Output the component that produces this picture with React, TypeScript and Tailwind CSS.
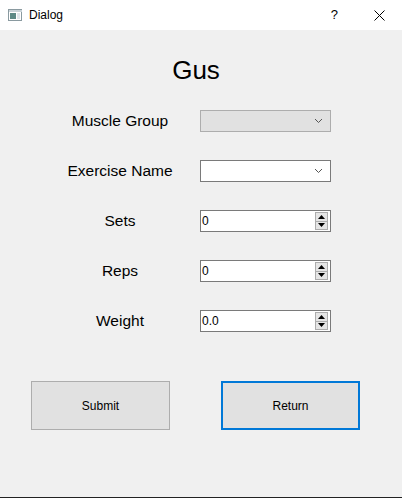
import React from "react";

const ui = { fontFamily: '"Liberation Sans", Arial, sans-serif' };

const Chevron = () => (
  <svg width="9" height="6" viewBox="0 0 9 6" className="mr-[7px]">
    <path d="M1 1 L4.5 4.5 L8 1" fill="none" stroke="#555" strokeWidth="1" />
  </svg>
);

const ComboBox = ({ disabled }: { disabled?: boolean }) => (
  <div
    className={`flex items-center justify-end w-[131px] h-[22px] border ${
      disabled ? "bg-[#e1e1e1] border-[#adadad]" : "bg-white border-[#7a7a7a]"
    }`}
  >
    <Chevron />
  </div>
);

const SpinBox = ({ value }: { value: string }) => (
  <div className="flex items-center w-[131px] h-[22px] border border-[#7a7a7a] bg-white">
    <span className="flex-1 pl-[1px] text-[12px] text-black leading-none">{value}</span>
    <div className="flex flex-col mr-[2px] w-[13px] h-[18px]">
      <div className="flex-1 flex items-center justify-center border border-[#adadad] bg-[#e5e5e5]">
        <svg width="7" height="4" viewBox="0 0 7 4">
          <path d="M3.5 0 L7 4 L0 4 Z" fill="#000" />
        </svg>
      </div>
      <div className="flex-1 flex items-center justify-center border border-t-0 border-[#adadad] bg-[#e5e5e5]">
        <svg width="7" height="4" viewBox="0 0 7 4">
          <path d="M0 0 L7 0 L3.5 4 Z" fill="#000" />
        </svg>
      </div>
    </div>
  </div>
);

const rows: { label: string; field: React.ReactNode }[] = [
  { label: "Muscle Group", field: <ComboBox disabled /> },
  { label: "Exercise Name", field: <ComboBox /> },
  { label: "Sets", field: <SpinBox value="0" /> },
  { label: "Reps", field: <SpinBox value="0" /> },
  { label: "Weight", field: <SpinBox value="0.0" /> },
];

export default function App() {
  return (
    <div className="w-[402px] h-[498px] flex flex-col bg-[#f0f0f0]" style={ui}>
      {/* title bar */}
      <div className="h-[30px] bg-white flex items-center">
        <svg width="14" height="12" viewBox="0 0 14 12" className="ml-[8px]">
          <rect x="0.5" y="0.5" width="13" height="11" fill="#fff" stroke="#8a9aa0" />
          <rect x="1" y="1" width="13" height="2" fill="#c9d3d8" />
          <rect x="2" y="4" width="6" height="6" fill="#5d8a86" />
          <rect x="9" y="4" width="3" height="6" fill="#dfe6ea" />
        </svg>
        <span className="ml-[7px] text-[12px] text-black">Dialog</span>
        <span className="ml-auto mr-[36px] text-[13px] text-black">?</span>
        <svg width="11" height="11" viewBox="0 0 11 11" className="mr-[17px]">
          <path d="M0.5 0.5 L10.5 10.5 M10.5 0.5 L0.5 10.5" stroke="#000" strokeWidth="1" />
        </svg>
      </div>

      {/* body */}
      <div className="flex-1 flex flex-col">
        <div className="mt-[25px] h-[30px] leading-[30px] text-[26px] text-black text-center pr-[10px]">
          Gus
        </div>

        <div className="mt-[25px] ml-[40px] grid grid-cols-[160px_131px] gap-y-[28px]">
          {rows.map((r) => (
            <React.Fragment key={r.label}>
              <div className="flex items-center justify-center text-[15.5px] text-black h-[22px]">
                {r.label}
              </div>
              {r.field}
            </React.Fragment>
          ))}
        </div>

        <div className="mt-[49px] flex pl-[31px] gap-[51px]">
          <button className="w-[139px] h-[49px] bg-[#e1e1e1] border border-[#adadad] text-[12px] text-black">
            Submit
          </button>
          <button className="w-[139px] h-[49px] bg-[#e1e1e1] border-2 border-[#0078d7] text-[12px] text-black">
            Return
          </button>
        </div>
      </div>
      <div className="h-[1px] bg-[#222]" />
    </div>
  );
}
